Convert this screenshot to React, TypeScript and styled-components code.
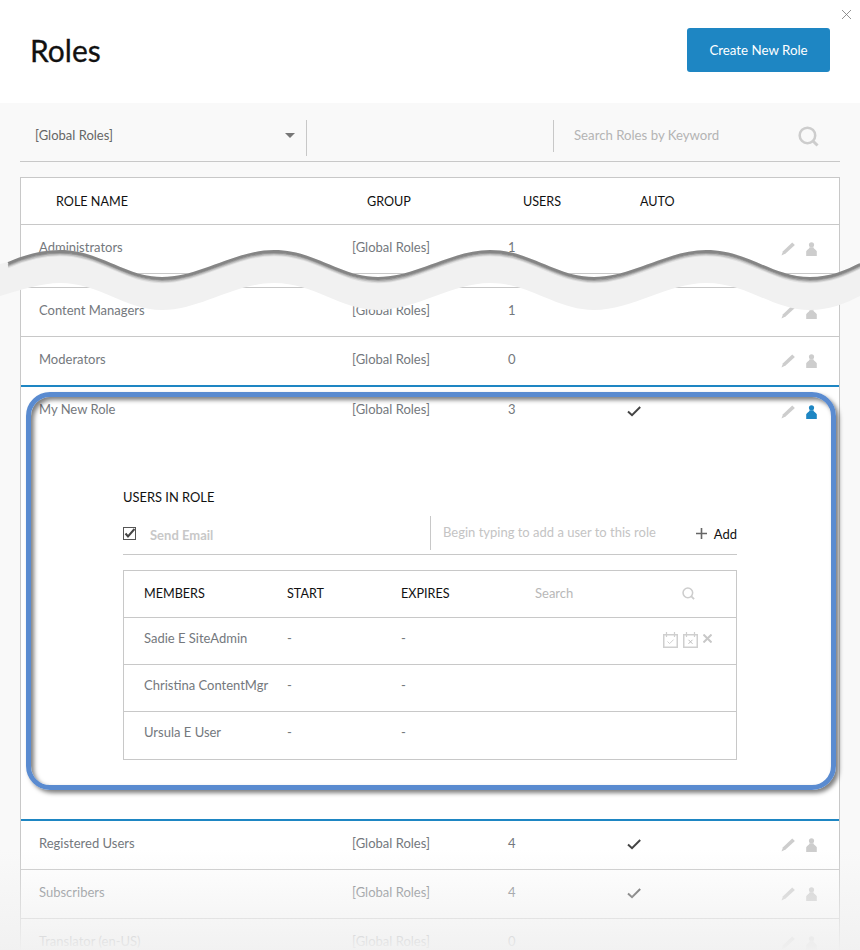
import React from "react";
import styled, { createGlobalStyle } from "styled-components";

const Global = createGlobalStyle`
  html, body { margin: 0; padding: 0; background: #f9f9f9; }
  * { box-sizing: border-box; }
  body { font-family: Lato, "Liberation Sans", sans-serif; }
`;

const Page = styled.div`
  position: relative;
  width: 860px;
  height: 950px;
  overflow: hidden;
  background: #f9f9f9;
  color: #74787d;
  font-size: 13px;
`;
const TopBar = styled.header`
  position: relative;
  height: 103px;
  background: #fff;
  display: flex;
  align-items: flex-start;
  justify-content: space-between;
  padding: 28px 30px 0 30px;
`;
const Title = styled.h1`
  margin: 0;
  font-size: 30px;
  line-height: 44px;
  font-weight: 400;
  color: #111;
  -webkit-text-stroke: 0.3px #111;
`;
const CreateButton = styled.button`
  width: 143px;
  height: 44px;
  border: 0;
  border-radius: 3px;
  background: #1e86c3;
  color: #fff;
  font: inherit;
  font-size: 13.3px;
`;
const Close = styled.svg`
  position: absolute;
  top: 10px;
  right: 9px;
`;
const FilterBar = styled.div`
  height: 59px;
  margin: 0 20px;
  border-bottom: 1px solid #c8c8c8;
  display: flex;
  align-items: flex-start;
`;
const SelectBox = styled.div`
  width: 287px;
  height: 36px;
  margin-top: 17px;
  padding: 0 11px 6px 15px;
  border-right: 1px solid #c8c8c8;
  display: flex;
  align-items: center;
  justify-content: space-between;
  color: #666;
`;
const Caret = styled.span`
  width: 0;
  height: 0;
  border-left: 5px solid transparent;
  border-right: 5px solid transparent;
  border-top: 5px solid #777;
`;
const KeywordSearch = styled.div`
  margin: 17px 0 0 246px;
  width: 267px;
  height: 32px;
  padding: 0 1px 0 20px;
  border-left: 1px solid #c8c8c8;
  display: flex;
  align-items: center;
  justify-content: space-between;
  color: #b4b4b4;
  font-size: 13.2px;
  > span { padding-bottom: 2px; }
`;
const RolesTable = styled.section`
  margin: 15px 20px 0;
  background: #fff;
  border: 1px solid #c8c8c8;
  border-bottom: 0;
`;
const HeaderRow = styled.div`
  height: 47px;
  padding-left: 35px;
  display: grid;
  grid-template-columns: 311px 156px 117px 1fr;
  align-items: center;
  border-bottom: 1px solid #c8c8c8;
  color: #111;
  font-size: 12.6px;
`;
const Row = styled.div<{ $h?: number }>`
  height: ${(p) => p.$h ?? 49}px;
  padding: 0 22px 5px 18px;
  display: grid;
  grid-template-columns: 313px 156px 115px 1fr auto;
  align-items: center;
  border-bottom: 1px solid #c8c8c8;
`;
const PlainRow = styled(Row)`
  border-bottom: 0;
`;
const AutoCell = styled.span`
  display: flex;
  padding: 4px 0 0 4px;
`;
const Actions = styled.div`
  display: flex;
  align-items: center;
  gap: 10px;
  padding-top: 5px;
`;
const Expanded = styled.div`
  border-top: 2px solid #1e86c3;
  border-bottom: 2px solid #1e86c3;
  height: 436px;
`;
const Panel = styled.div`
  margin: 54px 102px 0;
`;
const PanelTitle = styled.h3`
  margin: 0;
  font-size: 12.9px;
  line-height: 15px;
  font-weight: 400;
  color: #111;
`;
const SendRow = styled.div`
  height: 39px;
  margin-top: 11px;
  display: flex;
  align-items: flex-start;
  border-bottom: 1px solid #c8c8c8;
`;
const SendEmail = styled.div`
  width: 308px;
  height: 34px;
  display: flex;
  align-items: center;
  gap: 14px;
  border-right: 1px solid #c8c8c8;
  color: #c8c8c8;
  font-weight: 700;
  > span:last-child { padding-top: 4px; }
`;
const Check = styled.span`
  width: 13px;
  height: 13px;
  border: 1px solid #555;
  background: #fff;
  display: flex;
`;
const AddInput = styled.div`
  flex: 1;
  height: 34px;
  padding: 0 0 2px 12px;
  display: flex;
  align-items: center;
  justify-content: space-between;
  color: #c4c4c4;
`;
const AddButton = styled.span`
  display: flex;
  align-items: center;
  gap: 7px;
  color: #111;
  padding-top: 3px;
`;
const Members = styled.div`
  margin-top: 15px;
  border: 1px solid #c8c8c8;
`;
const MemberHead = styled.div`
  height: 47px;
  padding: 0 0 2px 20px;
  display: grid;
  grid-template-columns: 143px 114px 134px 147px auto;
  align-items: center;
  border-bottom: 1px solid #c8c8c8;
  color: #111;
  font-size: 12.6px;
`;
const MemberSearch = styled.span`
  color: #b8b8b8;
  font-size: 13px;
`;
const MemberRow = styled.div<{ $last?: boolean }>`
  height: 47px;
  padding: 0 24px 7px 20px;
  display: grid;
  grid-template-columns: 143px 114px 1fr auto;
  align-items: center;
  border-bottom: ${(p) => (p.$last ? "0" : "1px solid #c8c8c8")};
`;
const MemberActions = styled.div`
  display: flex;
  align-items: flex-start;
  gap: 5px;
  margin-top: 4px;
  > svg:last-child { margin-top: 2px; }
`;
const Tear = styled.svg`
  position: absolute;
  left: 0;
  top: 240px;
  pointer-events: none;
`;
const Highlight = styled.div`
  position: absolute;
  left: 26px;
  top: 392px;
  width: 810px;
  height: 398px;
  border: 5px solid #5a8bd0;
  border-radius: 24px;
  box-shadow: 3px 3px 4px rgba(0, 0, 0, 0.5), inset 3px 3px 4px rgba(0, 0, 0, 0.5);
  pointer-events: none;
`;
const Fade = styled.div`
  position: absolute;
  left: 0;
  right: 0;
  bottom: 0;
  height: 100px;
  background: linear-gradient(rgba(241, 241, 241, 0), rgba(241, 241, 241, 0.97));
  pointer-events: none;
`;

const Pencil = () => (
  <svg width="15" height="14" viewBox="0 0 15 14">
    <path d="M11.2 .6 L13.9 3 L4.6 11.6 L.5 13.5 L2 9.2 Z" fill="#cdcdcd" />
  </svg>
);
const Person = ({ color = "#cdcdcd" }: { color?: string }) => (
  <svg width="11" height="14" viewBox="0 0 11 14">
    <circle cx="5.5" cy="2.8" r="2.6" fill={color} />
    <path d="M3.6 5.2 H7.4 C7.8 7 10 7.6 10.8 9.2 V14 H.2 V9.2 C1 7.6 3.2 7 3.6 5.2 Z" fill={color} />
  </svg>
);
const Tick = ({ color = "#444" }: { color?: string }) => (
  <svg width="14" height="11" viewBox="0 0 14 11">
    <path d="M1 5.6 L5 9.2 L13.2 1" fill="none" stroke={color} strokeWidth="2" />
  </svg>
);
const SearchIcon = ({ size, width }: { size: number; width: number }) => (
  <svg width={size} height={size} viewBox="0 0 20 20">
    <circle cx="9" cy="9" r="7.4" fill="none" stroke="#cdcdcd" strokeWidth={width} />
    <path d="M14 14 L18.6 18.6" stroke="#cdcdcd" strokeWidth={width + 0.4} />
  </svg>
);
const Calendar = ({ mark }: { mark: "tick" | "cross" }) => (
  <svg width="15" height="16" viewBox="0 0 15 16">
    <path d="M.75 2.75 H14.25 V15.25 H.75 Z" fill="none" stroke="#cfcfcf" strokeWidth="1.5" />
    <path d="M3.5 0 V5 M11.5 0 V5" stroke="#cfcfcf" strokeWidth="1.2" />
    {mark === "tick" ? (
      <path d="M4.5 9.5 L6.6 11.6 L10.6 7.6" fill="none" stroke="#cfcfcf" strokeWidth="1" />
    ) : (
      <path d="M5.5 7.8 L9.5 11.8 M9.5 7.8 L5.5 11.8" fill="none" stroke="#bdbdbd" strokeWidth="1" />
    )}
  </svg>
);

const RoleCells = ({ name, count, auto, active }: { name: string; count: string; auto?: boolean; active?: boolean }) => (
  <>
    <span>{name}</span>
    <span>[Global Roles]</span>
    <span>{count}</span>
    <AutoCell>{auto && <Tick />}</AutoCell>
    <Actions>
      <Pencil />
      <Person color={active ? "#1e86c3" : undefined} />
    </Actions>
  </>
);

const wave =
  "C 100 250 125 277 162 277 C 200 277 235 250 274 250 C 315 250 340 277 378 277 C 416 277 452 250 490 250 C 530 250 556 277 594 277 C 632 277 668 250 706 250 C 748 250 772 277 810 277 C 830 277 846 270 860 263";
const topEdge = `M 8 262 C 24 255 42 250 60 250 ${wave}`;
const bandShape = `M 0 264 L 8 262 C 24 255 42 250 60 250 ${wave} L 860 296 C 846 303 830 310 810 310 C 772 310 748 283 706 283 C 668 283 632 310 594 310 C 556 310 530 283 490 283 C 452 283 416 310 378 310 C 340 310 315 283 274 283 C 235 283 200 310 162 310 C 125 310 100 283 60 283 C 42 283 20 290 0 296 Z`;

export default function App() {
  return (
    <Page>
      <Global />
      <TopBar>
        <Title>Roles</Title>
        <CreateButton>Create New Role</CreateButton>
        <Close width="9" height="9" viewBox="0 0 9 9">
          <path d="M0 0 L9 9 M9 0 L0 9" stroke="#777" strokeWidth="0.8" />
        </Close>
      </TopBar>
      <FilterBar>
        <SelectBox>
          <span>[Global Roles]</span>
          <Caret />
        </SelectBox>
        <KeywordSearch>
          <span>Search Roles by Keyword</span>
          <SearchIcon size={21} width={2.4} />
        </KeywordSearch>
      </FilterBar>
      <RolesTable>
        <HeaderRow>
          <span>ROLE NAME</span>
          <span>GROUP</span>
          <span>USERS</span>
          <span>AUTO</span>
        </HeaderRow>
        <Row><RoleCells name="Administrators" count="1" /></Row>
        <Row $h={14} />
        <Row><RoleCells name="Content Managers" count="1" /></Row>
        <PlainRow $h={48}><RoleCells name="Moderators" count="0" /></PlainRow>
        <Expanded>
          <PlainRow $h={49}><RoleCells name="My New Role" count="3" auto active /></PlainRow>
          <Panel>
            <PanelTitle>USERS IN ROLE</PanelTitle>
            <SendRow>
              <SendEmail>
                <Check>
                  <svg width="11" height="11" viewBox="0 0 11 11">
                    <path d="M1.5 5.5 L4 8.5 L10.5 1" fill="none" stroke="#444" strokeWidth="2" />
                  </svg>
                </Check>
                <span>Send Email</span>
              </SendEmail>
              <AddInput>
                <span>Begin typing to add a user to this role</span>
                <AddButton>
                  <svg width="11" height="11" viewBox="0 0 11 11">
                    <path d="M0 5.5 H11 M5.5 0 V11" stroke="#666" strokeWidth="1.6" />
                  </svg>
                  Add
                </AddButton>
              </AddInput>
            </SendRow>
            <Members>
              <MemberHead>
                <span>MEMBERS</span>
                <span>START</span>
                <span>EXPIRES</span>
                <MemberSearch>Search</MemberSearch>
                <SearchIcon size={13} width={2.4} />
              </MemberHead>
              <MemberRow>
                <span>Sadie E SiteAdmin</span>
                <span>-</span>
                <span>-</span>
                <MemberActions>
                  <Calendar mark="tick" />
                  <Calendar mark="cross" />
                  <svg width="9" height="9" viewBox="0 0 9 9">
                    <path d="M.5 .5 L8.5 8.5 M8.5 .5 L.5 8.5" stroke="#c8c8c8" strokeWidth="2" />
                  </svg>
                </MemberActions>
              </MemberRow>
              <MemberRow>
                <span>Christina ContentMgr</span>
                <span>-</span>
                <span>-</span>
              </MemberRow>
              <MemberRow $last>
                <span>Ursula E User</span>
                <span>-</span>
                <span>-</span>
              </MemberRow>
            </Members>
          </Panel>
        </Expanded>
        <Row><RoleCells name="Registered Users" count="4" auto /></Row>
        <Row><RoleCells name="Subscribers" count="4" auto /></Row>
        <Row><RoleCells name="Translator (en-US)" count="0" /></Row>
      </RolesTable>
      <Fade />
      <Highlight />
      <Tear width="860" height="80" viewBox="0 240 860 80">
        <defs>
          <clipPath id="band">
            <path d={bandShape} />
          </clipPath>
        </defs>
        <path d={bandShape} fill="#f1f1f1" />
        <g clipPath="url(#band)" fill="none">
          <path d={topEdge} transform="translate(0 5.5)" stroke="#e0e0e0" strokeWidth="1.5" />
          <path d={topEdge} transform="translate(0 4.4)" stroke="#c2c2c2" strokeWidth="1.5" />
          <path d={topEdge} transform="translate(0 3.2)" stroke="#a0a0a0" strokeWidth="1.5" />
          <path d={topEdge} transform="translate(0 1)" stroke="#858585" strokeWidth="3.8" />
        </g>
      </Tear>
    </Page>
  );
}
